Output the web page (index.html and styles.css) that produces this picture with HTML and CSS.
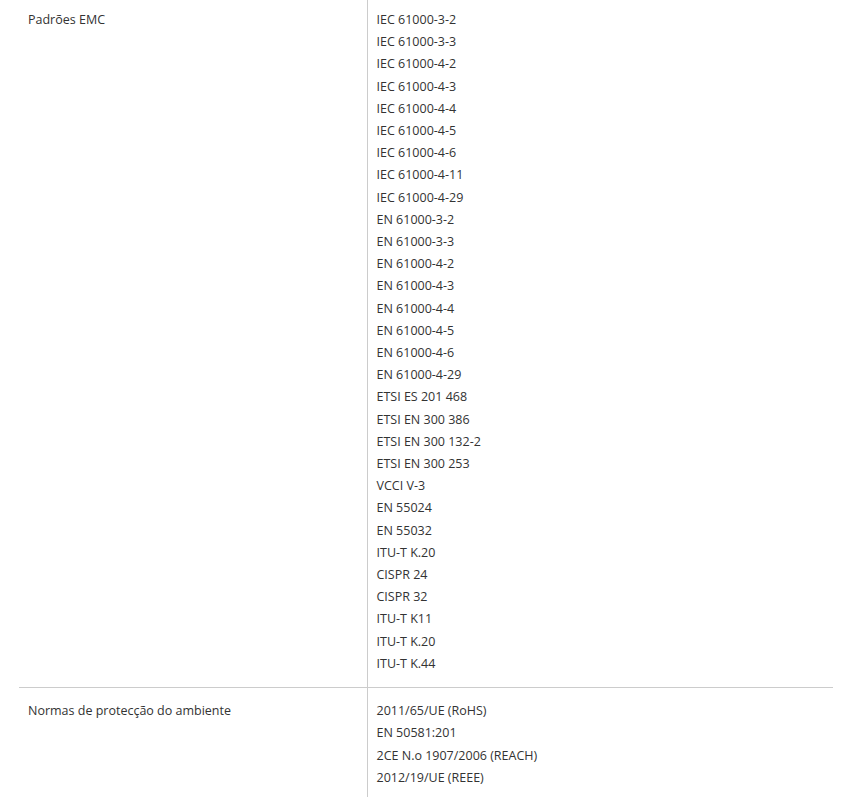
FILE: index.html
```html
<!DOCTYPE html>
<html lang="pt">
<head>
  <meta charset="UTF-8" />
  <meta name="viewport" content="width=device-width, initial-scale=1" />
  <title>Especificações</title>
  <link rel="stylesheet" href="styles.css">
</head>
<body>
  <div class="spec-wrap">
    <table class="spec-table">
      <tr>
        <td class="spec-name">Padrões EMC</td>
        <td class="spec-value">
          <p>IEC 61000-3-2</p>
          <p>IEC 61000-3-3</p>
          <p>IEC 61000-4-2</p>
          <p>IEC 61000-4-3</p>
          <p>IEC 61000-4-4</p>
          <p>IEC 61000-4-5</p>
          <p>IEC 61000-4-6</p>
          <p>IEC 61000-4-11</p>
          <p>IEC 61000-4-29</p>
          <p>EN 61000-3-2</p>
          <p>EN 61000-3-3</p>
          <p>EN 61000-4-2</p>
          <p>EN 61000-4-3</p>
          <p>EN 61000-4-4</p>
          <p>EN 61000-4-5</p>
          <p>EN 61000-4-6</p>
          <p>EN 61000-4-29</p>
          <p>ETSI ES 201 468</p>
          <p>ETSI EN 300 386</p>
          <p>ETSI EN 300 132-2</p>
          <p>ETSI EN 300 253</p>
          <p>VCCI V-3</p>
          <p>EN 55024</p>
          <p>EN 55032</p>
          <p>ITU-T K.20</p>
          <p>CISPR 24</p>
          <p>CISPR 32</p>
          <p>ITU-T K11</p>
          <p>ITU-T K.20</p>
          <p>ITU-T K.44</p>
        </td>
      </tr>
      <tr>
        <td class="spec-name">Normas de protecção do ambiente</td>
        <td class="spec-value">
          <p>2011/65/UE (RoHS)</p>
          <p>EN 50581:201</p>
          <p>2CE N.o 1907/2006 (REACH)</p>
          <p>2012/19/UE (REEE)</p>
        </td>
      </tr>
    </table>
  </div>
</body>
</html>
```

FILE: styles.css
```css
* {
  box-sizing: border-box;
  margin: 0;
  padding: 0;
}

body {
  font-family: 'Open Sans', sans-serif;
  font-size: 12.5px;
  color: #333;
  background: #fff;
}

.spec-wrap {
  padding: 0 14px 0 19px;
  margin-top: -3px;
}

.spec-table {
  width: 100%;
  border-collapse: collapse;
}

.spec-table td {
  vertical-align: top;
  padding: 12px 9px 12px 9px;
  line-height: 22.2px;
}

.spec-table tr + tr td {
  border-top: 1px solid #ccc;
}

.spec-name {
  width: 348px;
  border-right: 1px solid #ccc;
}

.spec-value {
  padding-left: 10px;
}
```
